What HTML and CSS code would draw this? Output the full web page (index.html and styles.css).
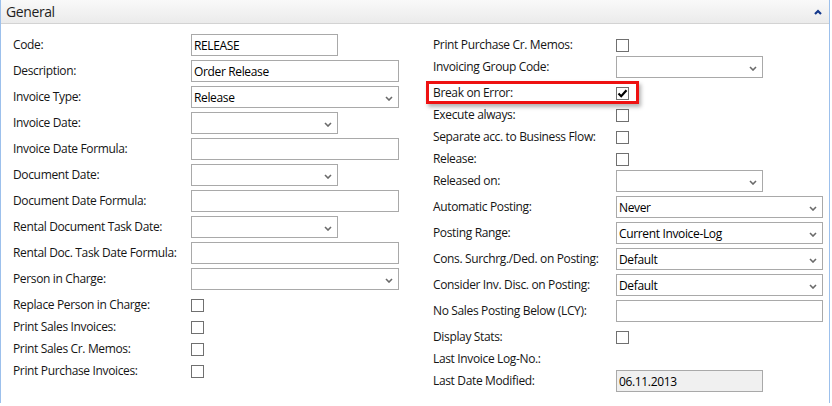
FILE: index.html
```html
<!DOCTYPE html>
<html>
<head>
<meta charset="utf-8">
<link rel="stylesheet" href="styles.css">
</head>
<body>
<div class="panel">
  <div class="hdr">
    <span class="title">General</span>
    <svg class="collapse" width="8" height="6" viewBox="0 0 8 6"><polyline points="1,5 4,2 7,5" fill="none" stroke="#14388c" stroke-width="2.2"/></svg>
  </div>
  <div class="body">
    <div class="col left">
      <div class="row"><span class="lbl">Code:</span><div class="fld w2">RELEASE</div></div>
      <div class="row"><span class="lbl">Description:</span><div class="fld w1">Order Release</div></div>
      <div class="row"><span class="lbl">Invoice Type:</span><div class="fld w1 dd">Release<svg class="arr" width="8" height="5" viewBox="0 0 8 5"><polyline points="1,1 4,4 7,1" fill="none" stroke="#6a6a6a" stroke-width="1.6"/></svg></div></div>
      <div class="row"><span class="lbl">Invoice Date:</span><div class="fld w2 dd"><svg class="arr" width="8" height="5" viewBox="0 0 8 5"><polyline points="1,1 4,4 7,1" fill="none" stroke="#6a6a6a" stroke-width="1.6"/></svg></div></div>
      <div class="row"><span class="lbl">Invoice Date Formula:</span><div class="fld w1"></div></div>
      <div class="row"><span class="lbl">Document Date:</span><div class="fld w2 dd"><svg class="arr" width="8" height="5" viewBox="0 0 8 5"><polyline points="1,1 4,4 7,1" fill="none" stroke="#6a6a6a" stroke-width="1.6"/></svg></div></div>
      <div class="row"><span class="lbl">Document Date Formula:</span><div class="fld w1"></div></div>
      <div class="row"><span class="lbl">Rental Document Task Date:</span><div class="fld w2 dd"><svg class="arr" width="8" height="5" viewBox="0 0 8 5"><polyline points="1,1 4,4 7,1" fill="none" stroke="#6a6a6a" stroke-width="1.6"/></svg></div></div>
      <div class="row"><span class="lbl">Rental Doc. Task Date Formula:</span><div class="fld w1"></div></div>
      <div class="row"><span class="lbl">Person in Charge:</span><div class="fld w1 dd"><svg class="arr" width="8" height="5" viewBox="0 0 8 5"><polyline points="1,1 4,4 7,1" fill="none" stroke="#6a6a6a" stroke-width="1.6"/></svg></div></div>
      <div class="row sm"><span class="lbl">Replace Person in Charge:</span><div class="cb"></div></div>
      <div class="row sm"><span class="lbl">Print Sales Invoices:</span><div class="cb"></div></div>
      <div class="row sm"><span class="lbl">Print Sales Cr. Memos:</span><div class="cb"></div></div>
      <div class="row sm"><span class="lbl">Print Purchase Invoices:</span><div class="cb"></div></div>
    </div>
    <div class="col right">
      <div class="row sm"><span class="lbl">Print Purchase Cr. Memos:</span><div class="cb"></div></div>
      <div class="row"><span class="lbl">Invoicing Group Code:</span><div class="fld w2 dd"><svg class="arr" width="8" height="5" viewBox="0 0 8 5"><polyline points="1,1 4,4 7,1" fill="none" stroke="#6a6a6a" stroke-width="1.6"/></svg></div></div>
      <div class="row sm"><span class="lbl">Break on Error:</span><div class="cb"><svg width="11" height="11" viewBox="0 0 11 11"><polyline points="1.5,5.5 4.2,8.2 9.5,2.2" fill="none" stroke="#000" stroke-width="2.2"/></svg></div></div>
      <div class="row sm"><span class="lbl">Execute always:</span><div class="cb"></div></div>
      <div class="row sm"><span class="lbl">Separate acc. to Business Flow:</span><div class="cb"></div></div>
      <div class="row sm"><span class="lbl">Release:</span><div class="cb"></div></div>
      <div class="row"><span class="lbl">Released on:</span><div class="fld w2 dd"><svg class="arr" width="8" height="5" viewBox="0 0 8 5"><polyline points="1,1 4,4 7,1" fill="none" stroke="#6a6a6a" stroke-width="1.6"/></svg></div></div>
      <div class="row"><span class="lbl">Automatic Posting:</span><div class="fld w3 dd">Never<svg class="arr" width="8" height="5" viewBox="0 0 8 5"><polyline points="1,1 4,4 7,1" fill="none" stroke="#6a6a6a" stroke-width="1.6"/></svg></div></div>
      <div class="row"><span class="lbl">Posting Range:</span><div class="fld w3 dd">Current Invoice-Log<svg class="arr" width="8" height="5" viewBox="0 0 8 5"><polyline points="1,1 4,4 7,1" fill="none" stroke="#6a6a6a" stroke-width="1.6"/></svg></div></div>
      <div class="row"><span class="lbl">Cons. Surchrg./Ded. on Posting:</span><div class="fld w3 dd">Default<svg class="arr" width="8" height="5" viewBox="0 0 8 5"><polyline points="1,1 4,4 7,1" fill="none" stroke="#6a6a6a" stroke-width="1.6"/></svg></div></div>
      <div class="row"><span class="lbl">Consider Inv. Disc. on Posting:</span><div class="fld w3 dd">Default<svg class="arr" width="8" height="5" viewBox="0 0 8 5"><polyline points="1,1 4,4 7,1" fill="none" stroke="#6a6a6a" stroke-width="1.6"/></svg></div></div>
      <div class="row"><span class="lbl">No Sales Posting Below (LCY):</span><div class="fld w3"></div></div>
      <div class="row sm"><span class="lbl">Display Stats:</span><div class="cb"></div></div>
      <div class="row sm"><span class="lbl">Last Invoice Log-No.:</span></div>
      <div class="row"><span class="lbl">Last Date Modified:</span><div class="fld w2 ro">06.11.2013</div></div>
    </div>
  </div>
  <div class="annot"></div>
</div>
</body>
</html>
```

FILE: styles.css
```css
html, body {
  margin: 0;
  background: #fff;
}
body {
  font-family: "Open Sans", "Noto Sans", sans-serif;
  font-size: 12px;
  letter-spacing: -0.35px;
  color: #151515;
}
.panel {
  position: relative;
  width: 830px;
  height: 403px;
  box-sizing: border-box;
  border-left: 1px solid #9cc0ec;
  border-right: 1px solid #9cc0ec;
}
.hdr {
  height: 24px;
  box-sizing: border-box;
  border-bottom: 1px solid #d3d3d3;
  background: linear-gradient(#f9f9f9, #ebebeb);
  display: flex;
  align-items: center;
  padding: 0 7px 0 5px;
}
.title {
  font-size: 14px;
  letter-spacing: -0.4px;
  color: #1e1e1e;
  line-height: 1;
}
.collapse {
  margin-left: auto;
}
.body {
  display: flex;
  padding-top: 8px;
}
.left {
  width: 432px;
  padding-left: 12px;
  box-sizing: border-box;
}
.right {
  flex: 1;
}
.row {
  display: flex;
  align-items: center;
  height: 26px;
  white-space: nowrap;
}
.row.sm {
  height: 22px;
  padding-top: 4px;
  box-sizing: border-box;
}
.lbl {
  line-height: 16px;
  padding-bottom: 1px;
}
.left .lbl {
  width: 178px;
  flex: none;
}
.right .lbl {
  width: 183px;
  flex: none;
}
.fld {
  height: 22px;
  box-sizing: border-box;
  border: 1px solid #a9a9a9;
  background: #fff;
  display: flex;
  align-items: center;
  padding: 0 5px 0 2px;
  color: #000;
}
.w1 { width: 208px; }
.w2 { width: 147px; }
.w3 { width: 207px; }
.dd .arr {
  margin-left: auto;
  margin-top: 2px;
}
.ro {
  background: #f0f0f0;
}
.cb {
  width: 13px;
  height: 13px;
  box-sizing: border-box;
  border: 1px solid #707070;
  background: #fff;
  display: flex;
  align-items: center;
  justify-content: center;
}
.annot {
  position: absolute;
  left: 425px;
  top: 81px;
  width: 213px;
  height: 23px;
  box-sizing: border-box;
  border: 3px solid #ee1111;
  box-shadow: 2px 3px 4px rgba(0, 0, 0, 0.3);
}
```
